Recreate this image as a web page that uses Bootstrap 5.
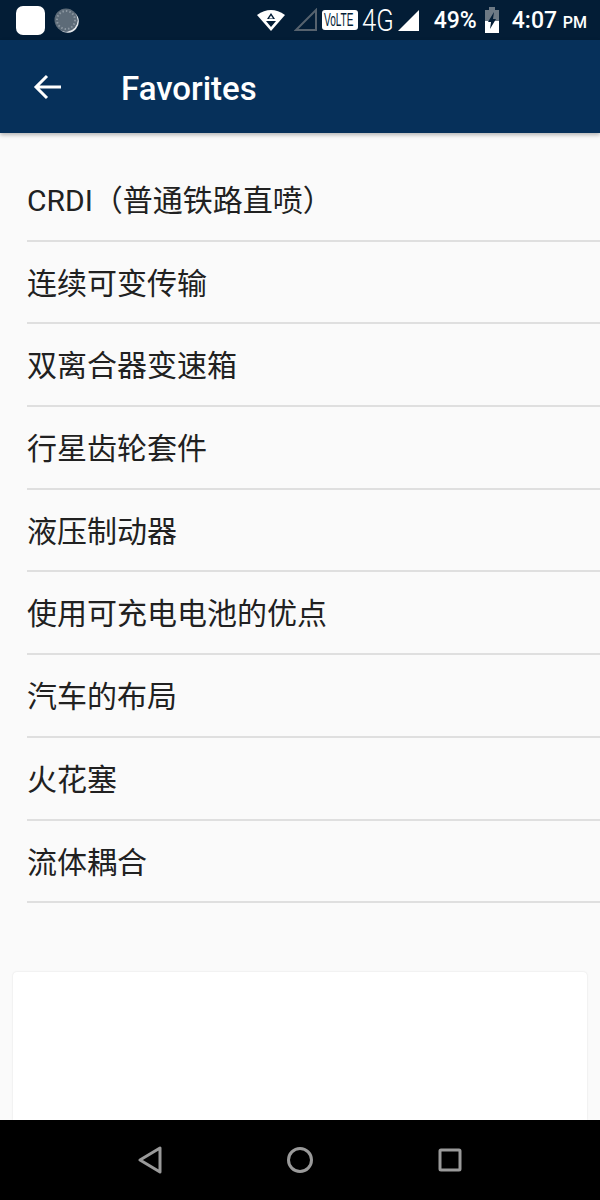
<!DOCTYPE html>
<html lang="zh">
<head>
    <meta charset="UTF-8">
    <meta name="viewport" content="width=device-width, initial-scale=1.0">
    <title>Favorites</title>
    <link rel="stylesheet" href="https://cdn.jsdelivr.net/npm/bootstrap@5.3.0/dist/css/bootstrap.min.css">
    <style>
        body { background: #fafafa; font-family: Roboto, "Noto Sans CJK SC", sans-serif; overflow: hidden; }
        .phone-screen { height: 1200px; width: 600px; }
        .status-bar { height: 40px; background: #031d36; color: #fff; padding: 0 13px 0 16px; font-size: 23px; }
        .app-icon { width: 29px; height: 29px; background: #fff; border-radius: 7px; }
        .status-text { font-weight: 500; line-height: 1; white-space: nowrap; }
        .battery-pct { margin-left: 14px; }
        .clock-text { margin-left: 13px; }
        .time-suffix { font-size: 16px; }
        .net-type { display: inline-block; width: 31px; margin-left: 4px; font-size: 32px; font-weight: 300; line-height: 1; transform: scaleX(.8); transform-origin: left center; white-space: nowrap; }
        .app-bar { height: 93px; background: #06305a; color: #fff; padding-left: 33px; box-shadow: 0 2px 4px rgba(0,0,0,.28); position: relative; }
        .app-title { font-size: 33px; font-weight: 500; margin-left: 60px; line-height: 1; padding-top: 3px; }
        .fav-list { margin: 26px 0 0 27px; }
        .fav-list .list-group-item { height: 82.7px; padding: 0; background: transparent; border: 0; border-bottom: 2px solid #dfdfdf; border-radius: 0; font-size: 30px; color: #212121; line-height: 83px; }
        .ad-card { height: 148px; margin: 0 13px; border: 0; border-radius: 4px 4px 0 0; box-shadow: 0 0 2px rgba(0,0,0,.12); }
        .nav-bar { height: 80px; background: #000; }
        .nav-bar svg { fill: none; stroke: #9a9a9a; stroke-width: 3; stroke-linejoin: round; }
        .nav-gap { gap: 124px; }
    </style>
</head>
<body>
    <div class="phone-screen d-flex flex-column">
        <!-- Barra de estado -->
        <div class="status-bar d-flex align-items-center">
            <div class="app-icon"></div>
            <svg class="ms-2" width="26" height="26" viewBox="0 0 26 26">
                <circle cx="13" cy="13" r="11.500" fill="#5d6b78"/>
                <circle cx="13" cy="13" r="9" fill="none" stroke="#8b96a0" stroke-width="2" stroke-dasharray="1.500 2"/>
                <path d="M22 6a11.500 11.500 0 0 1-15 17a10 10 0 0 0 15-17z" fill="#e4e7ea"/>
            </svg>
            <div class="d-flex align-items-center ms-auto">
                <svg width="30" height="24" viewBox="0 0 30 24">
                    <path d="M1 7Q15-3 29 7L15 23z" fill="#fff"/>
                    <path d="M15 5l4 6h-8zM10 13h10l-5 6z" fill="#031d36"/>
                    <path d="M15 7.500l2 3h-4z" fill="#fff"/>
                </svg>
                <svg class="ms-2" width="24" height="24" viewBox="0 0 24 24">
                    <path d="M2 22L22 2V22z" fill="none" stroke="#56626e" stroke-width="2"/>
                </svg>
                <svg class="ms-1" width="36" height="24" viewBox="0 0 36 24">
                    <rect x="0" y="2" width="36" height="20" rx="3" fill="#fff"/>
                    <text transform="translate(2 18) scale(.72 1.250)" font-family="Liberation Sans, sans-serif" font-size="14" fill="#031d36">VoLTE</text>
                </svg>
                <span class="net-type">4G</span>
                <svg class="ms-1" width="23" height="23" viewBox="0 0 23 23">
                    <path d="M1 22L22 1V22z" fill="#fff"/>
                </svg>
                <span class="status-text battery-pct">49%</span>
                <svg class="ms-2" width="14" height="26" viewBox="0 0 14 26">
                    <path d="M4 0h6v3h4v23H0V3h4z" fill="#6d7984"/>
                    <path d="M0 14h14v12H0z" fill="#fff"/>
                    <path d="M9 5L3 15h3l-1 7 6-10H8z" fill="#031d36"/>
                </svg>
                <span class="status-text clock-text">4:07 <span class="time-suffix">PM</span></span>
            </div>
        </div>

        <!-- Barra de la app -->
        <div class="app-bar d-flex align-items-center">
            <svg width="28" height="28" viewBox="0 0 28 28" fill="none" stroke="#fff" stroke-width="3">
                <path d="M28 14H3M14 3L3 14l11 11"/>
            </svg>
            <div class="app-title">Favorites</div>
        </div>

        <!-- Lista de favoritos -->
        <ul class="list-group fav-list" id="favList"></ul>

        <div class="card ad-card mt-auto"></div>

        <!-- Botones de navegación -->
        <div class="nav-bar d-flex align-items-center justify-content-center nav-gap">
            <svg width="26" height="28" viewBox="0 0 26 28"><path d="M3 14L23 2V26z"/></svg>
            <svg width="26" height="28" viewBox="0 0 26 28"><circle cx="13" cy="14" r="11.500"/></svg>
            <svg width="26" height="28" viewBox="0 0 26 28"><rect x="3" y="4" width="20" height="20" rx="1"/></svg>
        </div>
    </div>

    <script src="https://cdn.jsdelivr.net/npm/bootstrap@5.3.0/dist/js/bootstrap.bundle.min.js"></script>
    <script>
        const favorites = ['CRDI（普通铁路直喷）', '连续可变传输', '双离合器变速箱', '行星齿轮套件', '液压制动器', '使用可充电电池的优点', '汽车的布局', '火花塞', '流体耦合'];
        const list = document.getElementById('favList');
        favorites.forEach(name => {
            const item = document.createElement('li');
            item.className = 'list-group-item';
            item.textContent = name;
            list.appendChild(item);
        });
    </script>
</body>
</html>
